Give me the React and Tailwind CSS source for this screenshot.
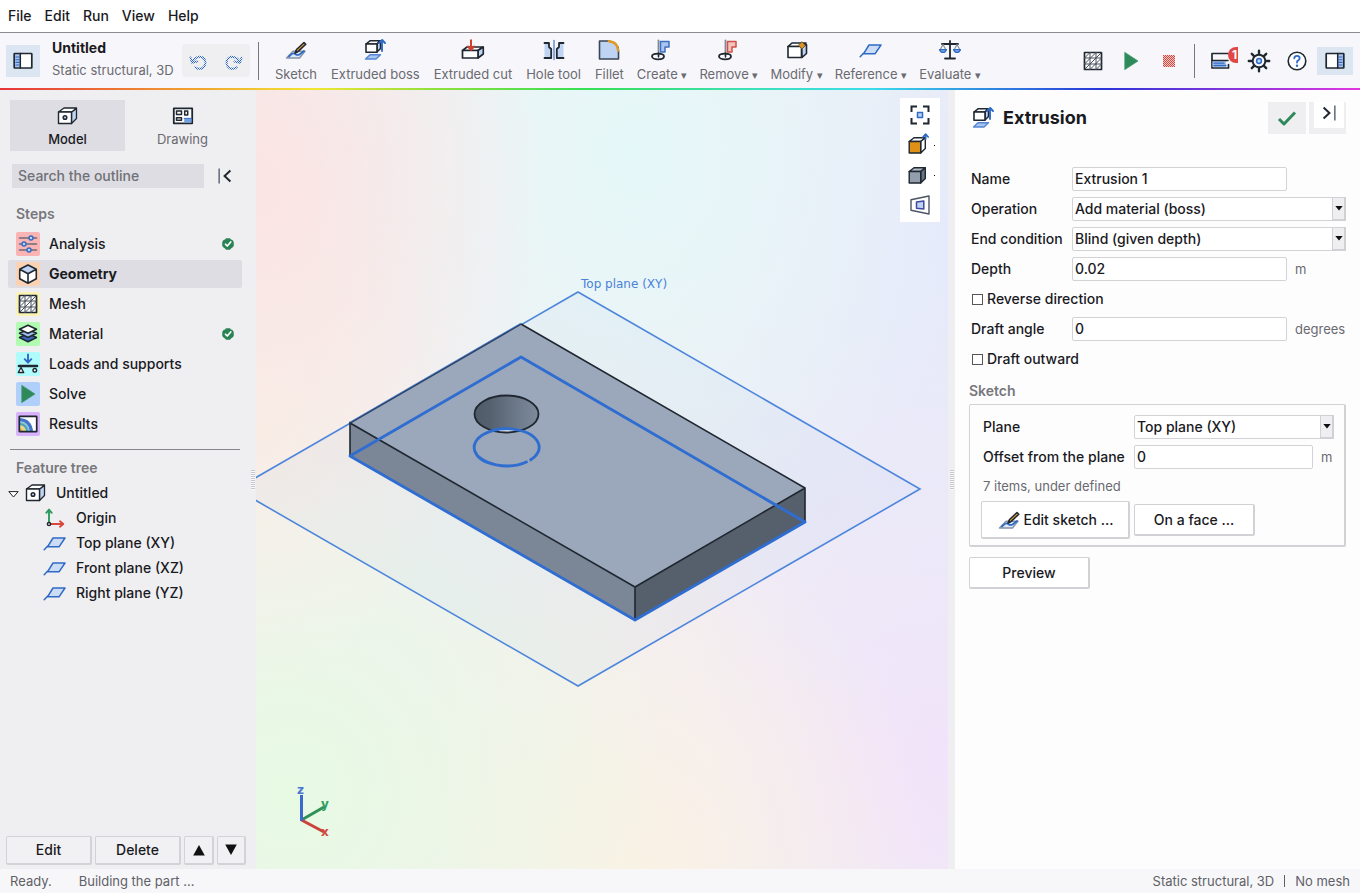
import React from "react";

const INK = "#1f2730";
const BLUE = "#2f6ac4";
const PALE = "#bfd3f2";

function Svg({ size = 24, children, className = "" }) {
  return (
    <svg
      width={size}
      height={size}
      viewBox="0 0 24 24"
      fill="none"
      strokeLinecap="round"
      strokeLinejoin="round"
      aria-hidden="true"
      className={"shrink-0 " + className}
    >
      {children}
    </svg>
  );
}

const SketchIcon = () => (
  <Svg>
    <path d="M2.5 20 L9 13.2 H21 L15.5 20 Z" fill="#dfe8f6" stroke="#8593a8" strokeWidth="1.4" />
    <path d="M5 18.5 C8 16 8 15 10 15.5 S12 18 15.5 16.5 L20 13" stroke={BLUE} strokeWidth="1.8" />
    <path d="M11 15 L12.5 11.5 L20 4.5 L21.8 6.3 L14 13.6 Z" fill="#d99a33" stroke={INK} strokeWidth="1.5" />
    <path d="M10.3 15.7 L12 12 L14 14 Z" fill={INK} />
  </Svg>
);

const BossIcon = () => (
  <Svg>
    <path d="M2.5 21 L7 16.7 H17.5 L13 21 Z" fill="#a9c5f0" stroke="#5585d4" strokeWidth="1.4" />
    <path d="M3 6 L7 2.8 H17 L14 6 Z" fill="#fff" stroke={INK} strokeWidth="1.5" />
    <path d="M14 6 L17.5 3 V10.5 L14 14 Z" fill={PALE} stroke={INK} strokeWidth="1.5" />
    <path d="M3 6 H14 V14.2 H3 Z" fill="#fff" stroke={INK} strokeWidth="1.6" />
    <path d="M19 13 V3 M16.2 5 L19.2 2 L22 5" stroke={BLUE} strokeWidth="1.9" />
  </Svg>
);

const CutIcon = () => (
  <Svg>
    <path d="M1.5 12.5 L6 9 H22 L17 12.5 Z" fill="#fff" stroke={INK} strokeWidth="1.6" />
    <path d="M17 12.5 L22.3 9 V16 L17 20 Z" fill={PALE} stroke={INK} strokeWidth="1.6" />
    <path d="M1.5 12.5 H17 V20 H1.5 Z" fill="#fff" stroke={INK} strokeWidth="1.7" />
    <path d="M10 2.2 V11 M7 8.5 L10 11.8 L13 8.5" stroke="#d0402f" strokeWidth="2" />
  </Svg>
);

const HoleIcon = () => (
  <Svg>
    <path d="M2.5 5.5 H7 V9.5 L9.2 11.5 V20 H2.5 Z" fill={PALE} />
    <path d="M21.5 5.5 H17 V9.5 L14.8 11.5 V20 H21.5 Z" fill={PALE} />
    <path d="M2.5 5 H7 V9 L9.2 11 V20 H2.5" stroke={INK} strokeWidth="1.8" />
    <path d="M21.5 5 H17 V9 L14.8 11 V20 H21.5" stroke={INK} strokeWidth="1.8" />
    <path d="M12 2.5 V21.5" stroke="#6f96d6" strokeWidth="1.6" />
  </Svg>
);

const FilletIcon = () => (
  <Svg>
    <path d="M2.5 3 H11 Q21.5 4 21.5 13 V21 H2.5 Z" fill={PALE} stroke="#3b4554" strokeWidth="1.6" />
    <path d="M12 3.2 Q20.8 4.2 21.2 12.5" stroke="#e09a25" strokeWidth="2.4" />
  </Svg>
);

const RevolveIcon = ({ stroke, fill }) => (
  <Svg>
    <path d="M8.5 2.5 V18" stroke="#808995" strokeWidth="1.8" />
    <path d="M10.5 3.5 H19 V9 H15 V14 H10.5 Z" fill={fill} stroke={stroke} strokeWidth="1.5" />
    <ellipse cx="8" cy="18.5" rx="6" ry="2.8" stroke={INK} strokeWidth="1.8" />
    <path d="M8.5 15 V19" stroke={INK} strokeWidth="1.3" />
  </Svg>
);

const ModifyIcon = () => (
  <Svg>
    <path d="M3 8.5 L7 5 H21 L17 8.5 Z" fill="#fff" stroke={INK} strokeWidth="1.6" />
    <path d="M16.5 9 L21.5 6.5 V15.5 L17 19.5 Z" fill={PALE} stroke={INK} strokeWidth="1.6" />
    <path d="M3 8.5 H16.5 V19.5 H3 Z" fill="#fff" stroke={INK} strokeWidth="1.6" />
    <path d="M17 4 L20.2 7.5 L17 11 L13.8 7.5 Z" fill="#df9526" stroke="#7c571e" strokeWidth="1" />
  </Svg>
);

const PlaneIcon = () => (
  <Svg>
    <path d="M4.5 15.8 L10 7 H22 L16 15.8 Z" fill="#cddcf5" stroke={BLUE} strokeWidth="1.5" />
    <path d="M1.2 18.8 L4.5 15.2" stroke={BLUE} strokeWidth="1.5" />
  </Svg>
);

const ScaleIcon = () => (
  <Svg>
    <path d="M12 3 V20 M7 20.5 H17 M4 6 H20 M12 3 V6" stroke={INK} strokeWidth="1.8" />
    <path d="M5 6.5 L2.3 11.5 M5 6.5 L7.7 11.5 M19 6.5 L16.3 11.5 M19 6.5 L21.7 11.5" stroke="#8a929d" strokeWidth="1.2" />
    <path d="M1.5 11.5 H8.5 Q7.5 14.5 5 14.5 T1.5 11.5Z M15.5 11.5 H22.5 Q21.5 14.5 19 14.5 T15.5 11.5Z" fill="#6d9be0" stroke={BLUE} strokeWidth="1.2" />
  </Svg>
);

const PartIcon = () => (
  <Svg>
    <path d="M2.5 8 L8 4 H20.5 L16 8 Z" fill="#fff" stroke={INK} strokeWidth="1.3" />
    <path d="M15.5 8.2 L20.5 4.4 V14.5 L15.5 19.5 Z" fill={PALE} stroke={INK} strokeWidth="1.3" />
    <path d="M2.5 8 H15.5 V19.5 H2.5 Z" fill="#fff" stroke={INK} strokeWidth="1.4" />
    <circle cx="9" cy="13.5" r="1.8" fill={PALE} stroke={INK} strokeWidth="1.5" />
  </Svg>
);

const DrawingIcon = () => (
  <Svg>
    <rect x="2.8" y="4.3" width="18.4" height="15" fill="#fff" stroke={INK} strokeWidth="1.8" />
    <rect x="5.5" y="7" width="5" height="3.5" stroke={INK} strokeWidth="1.5" />
    <rect x="13.7" y="7" width="3" height="4" stroke={INK} strokeWidth="1.5" />
    <rect x="5.5" y="13.7" width="5" height="2.6" stroke={INK} strokeWidth="1.5" />
    <rect x="13.2" y="14.7" width="7.2" height="3.9" fill="#6f9ee4" />
    <path d="M13.2 14.4 H20.4" stroke={BLUE} strokeWidth="1" />
  </Svg>
);

const MeshIcon = () => (
  <Svg>
    <rect x="3.5" y="3.5" width="17" height="17" fill="#fff" stroke={INK} strokeWidth="1.7" />
    <path
      d="M9 3.5 V20.5 M15 3.5 V20.5 M3.5 9 H20.5 M3.5 15 H20.5 M3.5 9 L9 3.5 M3.5 15 L15 3.5 M3.5 20.5 L20.5 3.5 M9 20.5 L20.5 9 M15 20.5 L20.5 15"
      stroke="#454e5a"
      strokeWidth="1"
    />
  </Svg>
);

const PlayIcon = () => (
  <Svg>
    <path d="M6 3.5 L19 12 L6 20.5 Z" fill="#2f8a5b" stroke="#3f9c6c" strokeWidth="0.8" />
  </Svg>
);

const StopIcon = () => (
  <Svg>
    <rect x="6" y="6" width="12" height="12" fill="#f3c8c6" />
    <path
      d="M6 6.5 H18 M6 8.5 H18 M6 10.5 H18 M6 12.5 H18 M6 14.5 H18 M6 16.5 H18"
      stroke="#d2493f"
      strokeDasharray="1 1"
      strokeLinecap="butt"
    />
    <path
      d="M7 7.5 H18 M7 9.5 H18 M7 11.5 H18 M7 13.5 H18 M7 15.5 H18 M7 17.5 H18"
      stroke="#d2493f"
      strokeDasharray="1 1"
      strokeLinecap="butt"
    />
  </Svg>
);

const LogIcon = () => (
  <Svg>
    <path d="M19 4.5 H3 V19 H19.5 V15.5" stroke={INK} strokeWidth="1.7" />
    <rect x="3.5" y="12" width="13.5" height="6" fill="#a9c5f0" />
    <path d="M3 11.5 H19" stroke={INK} strokeWidth="1.5" />
    <path d="M5 14.2 H15 M5 16.5 H17" stroke={BLUE} strokeWidth="1.3" />
  </Svg>
);

const GearIcon = () => (
  <Svg>
    <path
      d="M12 1.8 V6 M12 18 V22.2 M1.8 12 H6 M18 12 H22.2 M4.8 4.8 L7.8 7.8 M16.2 16.2 L19.2 19.2 M4.8 19.2 L7.8 16.2 M16.2 7.8 L19.2 4.8"
      stroke={INK}
      strokeWidth="2.4"
    />
    <circle cx="12" cy="12" r="6.3" fill="#f7f7fb" stroke={INK} strokeWidth="1.9" />
    <circle cx="12" cy="12" r="2.4" fill={PALE} stroke={BLUE} strokeWidth="1.5" />
  </Svg>
);

const HelpIcon = () => (
  <Svg>
    <circle cx="12" cy="12" r="8.8" fill="#fff" stroke={INK} strokeWidth="1.6" />
    <path d="M9.3 9.3 Q9.5 6.9 12 6.9 T14.7 9.3 Q14.7 10.8 12.9 11.6 Q12 12.1 12 13.6" stroke={BLUE} strokeWidth="1.8" />
    <circle cx="12" cy="16.8" r="1.2" fill={BLUE} />
  </Svg>
);

const SidebarIcon = ({ right = false }) => (
  <Svg className={right ? "-scale-x-100" : ""}>
    <rect x="3.2" y="4.5" width="17.6" height="14.5" fill="#fff" />
    <rect x="3.5" y="5" width="5.5" height="13.5" fill="#a9c5f0" />
    <path d="M5 8 H8 M5 10.7 H8 M5 13.4 H8 M5 16 H8" stroke={BLUE} strokeWidth="1.1" />
    <rect x="3.2" y="4.5" width="17.6" height="14.5" rx="0.5" stroke={INK} strokeWidth="1.7" />
    <path d="M9.3 4.5 V19" stroke={INK} strokeWidth="1.5" />
  </Svg>
);

const UndoIcon = ({ redo = false }) => (
  <Svg>
    <defs>
      <pattern id="undoDots" width="2" height="2" patternUnits="userSpaceOnUse">
        <rect width="1" height="1" fill="#2465c8" />
        <rect x="1" y="1" width="1" height="1" fill="#2465c8" />
      </pattern>
    </defs>
    {redo ? (
      <path d="M20.5 8.5 L19 13.8 L13.5 12.5 M18.6 13 C16 7 9 6.4 6.4 10.6 C4.2 14.6 6.8 19.8 11.5 19.8 Q14 19.8 15.8 18.2" stroke="url(#undoDots)" strokeWidth="2" />
    ) : (
      <path d="M3.5 8.5 L5 13.8 L10.5 12.5 M5.4 13 C8 7 15 6.4 17.6 10.6 C19.8 14.6 17.2 19.8 12.5 19.8 Q10 19.8 8.2 18.2" stroke="url(#undoDots)" strokeWidth="2" />
    )}
  </Svg>
);

const CollapseIcon = ({ right = false }) => (
  <Svg size={20} className={right ? "-scale-x-100" : ""}>
    <path d="M5 3 V21" stroke="#66707f" strokeWidth="1.9" strokeLinecap="butt" />
    <path d="M18.5 5.5 L11.5 12 L18.5 18.5" stroke={INK} strokeWidth="2.4" strokeLinecap="butt" strokeLinejoin="miter" />
  </Svg>
);

const SlidersIcon = () => (
  <Svg>
    <path d="M3.5 6 H20.5 M3.5 12 H20.5 M3.5 18 H20.5" stroke="#6c6a78" strokeWidth="1.5" />
    <circle cx="15" cy="6" r="2" fill={PALE} stroke={BLUE} strokeWidth="1.4" />
    <circle cx="8" cy="12" r="2" fill={PALE} stroke={BLUE} strokeWidth="1.4" />
    <circle cx="13" cy="18" r="2" fill={PALE} stroke={BLUE} strokeWidth="1.4" />
  </Svg>
);

const CubeIcon = () => (
  <Svg>
    <path d="M12 3 L20.3 7.3 V16.7 L12 21.2 L3.7 16.7 V7.3 Z" fill="#fff" />
    <path d="M12 3 L20.3 7.3 L12 11.8 L3.7 7.3 Z" fill={PALE} />
    <path d="M12 3 L20.3 7.3 V16.7 L12 21.2 L3.7 16.7 V7.3 Z M3.7 7.3 L12 11.8 L20.3 7.3 M12 11.8 V21" stroke={INK} strokeWidth="1.6" />
  </Svg>
);

const LayersIcon = () => (
  <Svg>
    <path d="M3.5 15.5 L12 11.5 L20.5 15.5 L12 19.8 Z" fill="#3a6bc0" stroke={INK} strokeWidth="1.6" />
    <path d="M3.5 11.3 L12 7.5 L20.5 11.3 L12 15.5 Z" fill="#9dbcec" stroke={INK} strokeWidth="1.6" />
    <path d="M3.5 7.2 L12 3.2 L20.5 7.2 L12 11.3 Z" fill="#fff" stroke={INK} strokeWidth="1.6" />
  </Svg>
);

const LoadsIcon = () => (
  <Svg>
    <path d="M12 2.5 V10 M8.7 7.2 L12 10.5 L15.3 7.2" stroke={BLUE} strokeWidth="1.9" />
    <path d="M3 14 H21" stroke={INK} strokeWidth="2.6" />
    <path d="M5 15.5 L2.3 20.5 H7.7 Z" fill="#fff" stroke={INK} strokeWidth="1.4" />
    <circle cx="18.8" cy="18.3" r="1.8" fill="#fff" stroke={INK} strokeWidth="1.4" />
  </Svg>
);

const ResultsIcon = () => (
  <Svg>
    <rect x="3.3" y="4.3" width="17.4" height="15.4" fill="#fff" />
    <path d="M4 6 Q16 7 17 19.5 H4 Z" fill="#4474c8" />
    <path d="M4 9 Q13 10 14 19.5 H4 Z" fill="#8fcad6" />
    <path d="M4 11 Q11.5 11.8 12.2 19.5 H4 Z" fill="#4f9fc0" />
    <path d="M4 13 Q9.5 13.8 10.2 19.5 H4 Z" fill="#e4d98a" />
    <path d="M4 16 Q6.8 16.5 7.2 19.5 H4 Z" fill="#e4b545" />
    <rect x="3.3" y="4.3" width="17.4" height="15.4" rx="0.5" stroke={INK} strokeWidth="1.7" />
  </Svg>
);

const OriginIcon = () => (
  <Svg>
    <path d="M6 16.5 V5 M3.3 6.8 L6 3.6 L8.7 6.8" stroke="#2f9a5f" strokeWidth="1.9" />
    <path d="M7.5 18 H20 M17 15.3 L20.3 18 L17 20.7" stroke="#d5483b" strokeWidth="1.9" />
    <circle cx="6" cy="18" r="1.6" fill="#fff" stroke={INK} strokeWidth="1.5" />
  </Svg>
);

const DoneIcon = () => (
  <Svg size={12}>
    <path d="M8 0.5 H16 L18 3 L21 4 L23.5 8 V16 L21 19 L18 21 L16 23.5 H8 L6 21 L3 19 L0.5 16 V8 L3 4 L6 3 Z" fill="#2a8355" />
    <path d="M7 12.5 L10.5 16 L17.5 8" stroke="#fff" strokeWidth="3.4" />
  </Svg>
);

const FitIcon = () => (
  <Svg>
    <path d="M3.5 9 V3.5 H9 M15 3.5 H20.5 V9 M20.5 15 V20.5 H15 M9 20.5 H3.5 V15" stroke={INK} strokeWidth="2" strokeLinecap="butt" strokeLinejoin="miter" />
    <rect x="9.5" y="9.5" width="5" height="5" fill={PALE} stroke={BLUE} strokeWidth="1.5" />
  </Svg>
);

const BlockIcon = ({ front, side, top, arrow = false }) => (
  <Svg>
    <path d="M1.2 8.5 L6 4.8 H17.3 L12.7 8.5 Z" fill={top} stroke={INK} strokeWidth="1.4" />
    <path d="M12.7 8.5 L17.3 4.8 V15.5 L12.7 20 Z" fill={side} stroke={INK} strokeWidth="1.4" />
    <path d="M1.2 8.5 H12.7 V20 H1.2 Z" fill={front} stroke={INK} strokeWidth="1.4" />
    {arrow && <path d="M17.6 6 V1.4 M15 4 L17.6 1.2 L20.2 4" stroke={BLUE} strokeWidth="1.7" />}
  </Svg>
);

const PerspectiveIcon = () => (
  <Svg>
    <path d="M3 6.8 L21 3 V21 L3 17.2 Z" fill="#fff" stroke="#4b5563" strokeWidth="1.4" />
    <path d="M8.5 9 L15.8 8 V16 L8.5 15.2 Z" fill={PALE} stroke="#4049a0" strokeWidth="1.5" />
  </Svg>
);

const tools = [
  ["Sketch", <SketchIcon />],
  ["Extruded boss", <BossIcon />],
  ["Extruded cut", <CutIcon />],
  ["Hole tool", <HoleIcon />],
  ["Fillet", <FilletIcon />],
];

const toolMenus = [
  ["Create", <RevolveIcon stroke="#3f6fc0" fill="#a9c5f0" />],
  ["Remove", <RevolveIcon stroke="#cf5048" fill="#f3c3bd" />],
  ["Modify", <ModifyIcon />],
  ["Reference", <PlaneIcon />],
  ["Evaluate", <ScaleIcon />],
];

const steps = [
  ["Analysis", <SlidersIcon />, "bg-[#fab4b4]", true],
  ["Geometry", <CubeIcon />, "bg-[#fbd3b4]", false],
  ["Mesh", <MeshIcon />, "bg-[#fbf3b4]", false],
  ["Material", <LayersIcon />, "bg-[#b2fbb2]", true],
  ["Loads and supports", <LoadsIcon />, "bg-[#b0fbfb]", false],
  ["Solve", <PlayIcon />, "bg-[#b0d0fb]", false],
  ["Results", <ResultsIcon />, "bg-[#d8b2fb]", false],
];

const planes = ["Top plane (XY)", "Front plane (XZ)", "Right plane (YZ)"];

function MenuBar() {
  return (
    <nav className="flex h-[33px] shrink-0 items-center gap-[13px] border-b border-[#8c8c92] bg-white px-2">
      {["File", "Edit", "Run", "View", "Help"].map((m) => (
        <button key={m} type="button">
          {m}
        </button>
      ))}
    </nav>
  );
}

function IconButton({ label, children, className = "" }) {
  return (
    <button type="button" aria-label={label} className={"flex items-center justify-center " + className}>
      {children}
    </button>
  );
}

function Toolbar() {
  const toolButton =
    "flex flex-col items-center text-[13px] leading-6 font-normal whitespace-nowrap text-[#6a6a70]";
  return (
    <header className="shrink-0 bg-[#f7f7fb]">
      <div className="flex h-[55px] items-center pr-[7px] pl-1.5">
        <IconButton label="Toggle outline" className="h-8 w-[34px] bg-[#dce6f3]">
          <SidebarIcon />
        </IconButton>
        <div className="ml-3 w-[130px] pb-1">
          <h1 className="text-sm leading-[22px] font-bold">Untitled</h1>
          <p className="text-[13px] leading-[22px] font-normal text-[#6a6a70]">Static structural, 3D</p>
        </div>
        <div className="flex h-[33px] w-[68px] items-center justify-around rounded-sm bg-[#efeff2]">
          <IconButton label="Undo">
            <UndoIcon />
          </IconButton>
          <IconButton label="Redo">
            <UndoIcon redo />
          </IconButton>
        </div>
        <div className="mr-[9px] ml-2 h-[38px] w-px bg-[#77777d]" />
        <div className="flex pt-1">
          {tools.map(([label, icon]) => (
            <button key={label} type="button" className={toolButton + " px-[7px]"}>
              {icon}
              {label}
            </button>
          ))}
          {toolMenus.map(([label, icon]) => (
            <button key={label} type="button" aria-haspopup="menu" className={toolButton + " px-1.5"}>
              {icon}
              <span>
                {label} <span className="text-[11px]">▾</span>
              </span>
            </button>
          ))}
        </div>
        <div className="ml-auto flex items-center">
          <IconButton label="Generate mesh" className="w-[38px]">
            <MeshIcon />
          </IconButton>
          <IconButton label="Run" className="w-[38px]">
            <PlayIcon />
          </IconButton>
          <IconButton label="Stop" className="w-[38px]">
            <StopIcon />
          </IconButton>
          <div className="mr-[7px] ml-1.5 h-[34px] w-px bg-[#77777d]" />
          <IconButton label="Messages" className="relative w-[38px]">
            <LogIcon />
            <span className="absolute -top-0.5 right-0.5 h-4 w-2.5 overflow-hidden rounded-l-full bg-[#e04848] pl-1 text-left text-xs leading-4 font-bold text-white">
              1
            </span>
          </IconButton>
          <IconButton label="Settings" className="w-[38px]">
            <GearIcon />
          </IconButton>
          <IconButton label="Help" className="mr-px w-[38px]">
            <HelpIcon />
          </IconButton>
          <IconButton label="Toggle properties" className="h-7 w-9 bg-[#dce6f3]">
            <SidebarIcon right />
          </IconButton>
        </div>
      </div>
      <div className="h-0.5 bg-[linear-gradient(90deg,#e8323c_0%,#f0a030_14%,#f2e632_23%,#8fe03c_32%,#36df55_43%,#3ce0b0_54%,#3cdcea_64%,#2f86e0_73%,#2a34d8_81%,#8a34dc_91%,#e236e0_100%)]" />
    </header>
  );
}

function Splitter({ width }) {
  return (
    <div className={"flex shrink-0 items-center justify-center bg-[#efeff2] " + width}>
      <div className="h-5 w-1 bg-[repeating-linear-gradient(180deg,#c8c8cc_0_1px,#fafafa_1px_2px)]" />
    </div>
  );
}

function Outline() {
  const pushButton =
    "h-[29px] rounded-xs border border-r-2 border-b-2 border-[#d2d2d7] bg-[#f1f1f4] text-center";
  return (
    <aside className="flex w-[250px] shrink-0 flex-col bg-[#efeff2]">
      <div className="mx-2.5 mt-2.5 grid grid-cols-2 text-[13px] leading-[22px]">
        <button type="button" className="flex h-[51px] flex-col items-center bg-[#dddde3] pt-1">
          <PartIcon />
          Model
        </button>
        <button type="button" className="flex h-[51px] flex-col items-center pt-1 font-normal text-[#6a6a70]">
          <DrawingIcon />
          Drawing
        </button>
      </div>
      <div className="mt-[13px] flex items-center pl-3">
        <input
          type="text"
          aria-label="Search the outline"
          placeholder="Search the outline"
          className="h-6 w-48 bg-[#dddde3] px-1.5 pb-px placeholder:text-[#707076]"
        />
        <IconButton label="Collapse outline" className="ml-[11px]">
          <CollapseIcon />
        </IconButton>
      </div>
      <h2 className="mt-4 ml-4 leading-5 font-semibold text-[#77777c]">Steps</h2>
      <ul className="mr-2 ml-2 pt-[5px]">
        {steps.map(([label, icon, tint, done]) => (
          <li key={label} className="flex h-[30px] items-center">
            <button
              type="button"
              className={
                "flex h-7 w-full items-center gap-[9px] px-2 text-left " +
                (label === "Geometry" ? "rounded-xs bg-[#dddde3] font-bold" : "")
              }
            >
              <span className={"rounded-xs " + tint}>{icon}</span>
              <span className="flex-1">{label}</span>
              {done && <DoneIcon />}
            </button>
          </li>
        ))}
      </ul>
      <hr className="mx-2.5 mt-2.5 border-[#85858b]" />
      <h2 className="mt-2 ml-4 leading-5 font-semibold text-[#77777c]">Feature tree</h2>
      <ul className="mt-0.5 leading-[25px]">
        <li>
          <button type="button" className="flex h-[25px] items-center pl-2">
            <svg width="11" height="11" viewBox="0 0 11 11" aria-hidden="true" className="mr-[5px]">
              <path d="M0.8 4.6 H10.2 L5.5 10 Z" fill="#fff" stroke="#222" />
            </svg>
            <PartIcon />
            <span className="ml-2">Untitled</span>
          </button>
          <ul className="pl-[43px]">
            <li>
              <button type="button" className="flex h-[25px] items-center gap-[9px]">
                <OriginIcon />
                Origin
              </button>
            </li>
            {planes.map((p) => (
              <li key={p}>
                <button type="button" className="flex h-[25px] items-center gap-[9px]">
                  <PlaneIcon />
                  {p}
                </button>
              </li>
            ))}
          </ul>
        </li>
      </ul>
      <div className="mt-auto mb-1 flex gap-[3px] pl-1.5">
        <button type="button" className={pushButton + " w-[86px]"}>
          Edit
        </button>
        <button type="button" className={pushButton + " w-[86px]"}>
          Delete
        </button>
        <IconButton label="Move up" className={pushButton + " w-[30px]"}>
          <svg width="12" height="12" viewBox="0 0 12 12" aria-hidden="true">
            <path d="M6 1 L11.8 11.5 H0.2 Z" fill="#111" />
          </svg>
        </IconButton>
        <IconButton label="Move down" className={pushButton + " w-[29px]"}>
          <svg width="12" height="12" viewBox="0 0 12 12" aria-hidden="true">
            <path d="M6 11 L11.8 0.5 H0.2 Z" fill="#111" />
          </svg>
        </IconButton>
      </div>
    </aside>
  );
}

function Viewport() {
  return (
    <main className="relative min-w-0 flex-1 overflow-hidden bg-[#f2f0f2] bg-[radial-gradient(ellipse_42%_45%_at_0%_12%,#fbe4e3_0%,#fbe4e300_100%),radial-gradient(ellipse_30%_35%_at_0%_42%,#f8f0e6_0%,#f8f0e600_100%),radial-gradient(ellipse_50%_55%_at_55%_8%,#e5f8f9_0%,#e5f8f900_100%),radial-gradient(ellipse_50%_65%_at_100%_20%,#e5e9fb_0%,#e5e9fb00_100%),radial-gradient(ellipse_55%_50%_at_5%_90%,#e7fae3_0%,#e7fae300_100%),radial-gradient(ellipse_42%_45%_at_55%_100%,#faf2e4_0%,#faf2e400_100%),radial-gradient(ellipse_52%_65%_at_100%_85%,#f1e3fa_0%,#f1e3fa00_100%)]">
      <svg viewBox="256 90 692 779" className="h-full w-full" role="img" aria-label="Part view">
        <defs>
          <linearGradient id="bore" x1="0" x2="1" y1="0" y2="0">
            <stop offset="0" stopColor="#505b69" />
            <stop offset="0.25" stopColor="#56616f" />
            <stop offset="0.7" stopColor="#6f7c8c" />
            <stop offset="1" stopColor="#7c8a9b" />
          </linearGradient>
          <clipPath id="boreClip">
            <ellipse cx="506.5" cy="414" rx="32" ry="18.5" />
          </clipPath>
        </defs>
        <path d="M578 292 L920 489 L578 686 L236 489 Z" fill="#5a9ae0" fillOpacity="0.05" stroke="#4d86dc" strokeWidth="1.6" />
        <path d="M521 324 L805 488 L635 587 L350 423 Z" fill="#9ba8bb" />
        <path d="M350 423 L635 587 V620 L350 456 Z" fill="#7b8797" />
        <path d="M635 587 L805 488 V522 L635 620 Z" fill="#55606c" />
        <ellipse cx="506.5" cy="414" rx="32" ry="18.5" fill="url(#bore)" />
        <ellipse cx="506.5" cy="447.5" rx="32" ry="18.5" fill="#f4f6f8" clipPath="url(#boreClip)" />
        <ellipse cx="506.5" cy="414" rx="32" ry="18.5" fill="none" stroke={INK} strokeWidth="1.8" />
        <path d="M350 456 V423 L635 587 L805 488 M521 324 L805 488 V522 M635 587 V620" fill="none" stroke={INK} strokeWidth="1.6" />
        <path d="M350 423 L521 324" stroke="#2c4265" strokeWidth="1.8" />
        <path d="M350 422 L521 323" stroke="#4d86dc" strokeWidth="0.8" />
        <path d="M350 456 L521 357 L805 522 L635 620 Z" fill="none" stroke="#2f6dd0" strokeWidth="2.9" strokeLinejoin="round" />
        <path d="M529.7 460.4 A32.5 18.5 0 1 0 527.6 461.5" fill="none" stroke="#2f6dd0" strokeWidth="2.9" />
        <text x="581" y="288" fontFamily="'DejaVu Sans', sans-serif" fontSize="12" fontWeight="400" fill="#4a82d8">
          Top plane (XY)
        </text>
        <g strokeWidth="3" fontFamily="'DejaVu Sans', sans-serif" fontSize="12" fontWeight="700">
          <path d="M301.5 820 L324 807" stroke="#2f9158" />
          <path d="M301.5 820 L324 832" stroke="#c9443a" />
          <path d="M301.5 821 V795" stroke="#3a68cc" />
          <text x="297" y="794" fill="#4a74d4">z</text>
          <text x="321" y="808" fill="#2f9d61">y</text>
          <text x="321" y="836" fill="#d04a40">x</text>
        </g>
      </svg>
      <div className="absolute top-2 right-2 flex h-[124px] w-10 flex-col items-start justify-between bg-white px-2 py-[5px]">
        <IconButton label="Fit view">
          <FitIcon />
        </IconButton>
        <IconButton label="Standard views">
          <BlockIcon front="#df9117" side="#fff" top="#fff" arrow />
          <span className="ml-0.5 h-px w-px bg-black" />
        </IconButton>
        <IconButton label="Display style">
          <BlockIcon front="#929eac" side="#677483" top="#b3bdc9" />
          <span className="ml-0.5 h-px w-px bg-black" />
        </IconButton>
        <IconButton label="Perspective">
          <PerspectiveIcon />
        </IconButton>
      </div>
    </main>
  );
}

const fieldBox = "h-6 w-full min-w-0 rounded-xs border border-[#d3d3d7] bg-white px-0.5";

function SelectField({ id, value }) {
  return (
    <div className="relative col-span-2">
      <select id={id} defaultValue={value} className={fieldBox + " block appearance-none"}>
        <option>{value}</option>
      </select>
      <span className="pointer-events-none absolute inset-y-0 right-0 flex w-3.5 items-center justify-center border border-r-2 border-b-2 border-[#d0d0d5] bg-[#efeff2]">
        <svg width="8" height="5" viewBox="0 0 8 5" aria-hidden="true" className="shrink-0">
          <path d="M0.3 0 H7.7 L4 4.5 Z" fill="#111" />
        </svg>
      </span>
    </div>
  );
}

function Field({ id, label, value, unit }) {
  return (
    <>
      <label htmlFor={id}>{label}</label>
      <input id={id} type="text" defaultValue={value} className={fieldBox + " pb-px"} />
      <span className="pl-2 text-[13px] font-normal text-[#6a6a70]">{unit}</span>
    </>
  );
}

function CheckField({ id, label }) {
  return (
    <div className="col-span-3 flex items-center gap-1 pl-px">
      <input id={id} type="checkbox" className="h-[11px] w-[11px] appearance-none border border-[#55555a] bg-white" />
      <label htmlFor={id}>{label}</label>
    </div>
  );
}

function Properties() {
  const pushButton = "rounded-xs border border-r-2 border-b-2 border-[#d2d2d6] bg-white";
  return (
    <aside className="w-[405px] shrink-0 bg-[#fdfdfe] pr-3.5 pl-3.5">
      <div className="flex h-14 items-center gap-2">
        <div className="flex flex-1 items-center gap-2 pl-0.5">
          <BossIcon />
          <h2 className="text-lg font-bold">Extrusion</h2>
        </div>
        <div className="flex gap-[3px]">
          <IconButton label="Accept" className="h-8 w-[38px] bg-[#efeff1]">
            <Svg>
              <path d="M4 13 L9 18 L20 6.5" stroke="#2f8a5b" strokeWidth="3" strokeLinecap="butt" />
            </Svg>
          </IconButton>
          <div className="flex h-8 w-[37px] justify-end bg-[#efeff1] pr-0.5">
            <IconButton label="Collapse properties" className="h-[26px] w-[30px] bg-white pb-1">
              <CollapseIcon right />
            </IconButton>
          </div>
        </div>
      </div>
      <form>
        <div className="mt-[18px] grid auto-rows-[30px] grid-cols-[101px_1fr_59px] items-center pl-0.5">
          <Field id="name" label="Name" value="Extrusion 1" />
          <label htmlFor="operation">Operation</label>
          <SelectField id="operation" value="Add material (boss)" />
          <label htmlFor="end">End condition</label>
          <SelectField id="end" value="Blind (given depth)" />
          <Field id="depth" label="Depth" value="0.02" unit="m" />
          <CheckField id="reverse" label="Reverse direction" />
          <Field id="draft" label="Draft angle" value="0" unit="degrees" />
          <CheckField id="outward" label="Draft outward" />
        </div>
        <h3 className="mt-[7px] leading-5 font-semibold text-[#77777c]">Sketch</h3>
        <div className="mt-[3px] rounded-xs border border-r-2 border-b-2 border-[#d2d2d6] pt-[7px] pr-2.5 pb-1.5 pl-[11px]">
          <div className="grid auto-rows-[30px] grid-cols-[151px_1fr_21px] items-center pl-0.5">
            <label htmlFor="plane">Plane</label>
            <SelectField id="plane" value="Top plane (XY)" />
            <Field id="offset" label="Offset from the plane" value="0" unit="m" />
          </div>
          <p className="pt-1 pb-1 pl-0.5 text-[13px] leading-[21px] font-normal text-[#6a6a70]">7 items, under defined</p>
          <div className="flex items-center gap-1">
            <button type="button" className={pushButton + " flex h-[38px] w-[149px] items-center justify-center gap-[3px]"}>
              <SketchIcon />
              Edit sketch ...
            </button>
            <button type="button" className={pushButton + " h-8 w-[121px]"}>
              On a face ...
            </button>
          </div>
        </div>
        <button type="button" className={pushButton + " mt-2.5 h-8 w-[121px]"}>
          Preview
        </button>
      </form>
    </aside>
  );
}

export default function App() {
  return (
    <div className="flex h-screen flex-col bg-[#f7f7fb] font-['Inter',sans-serif] text-sm font-medium text-[#1a1a1e]">
      <MenuBar />
      <Toolbar />
      <div className="flex min-h-0 flex-1">
        <Outline />
        <Splitter width="w-1.5" />
        <Viewport />
        <Splitter width="w-[7px]" />
        <Properties />
      </div>
      <footer className="flex h-6 shrink-0 items-center justify-between bg-[#f7f7fa] px-2.5 text-[13px] font-normal text-[#606066]">
        <div className="flex gap-[27px]">
          <span>Ready.</span>
          <span>Building the part ...</span>
        </div>
        <div className="flex items-center gap-2.5">
          <span>Static structural, 3D</span>
          <span className="h-3 w-px bg-[#606066]" />
          <span>No mesh</span>
        </div>
      </footer>
    </div>
  );
}
